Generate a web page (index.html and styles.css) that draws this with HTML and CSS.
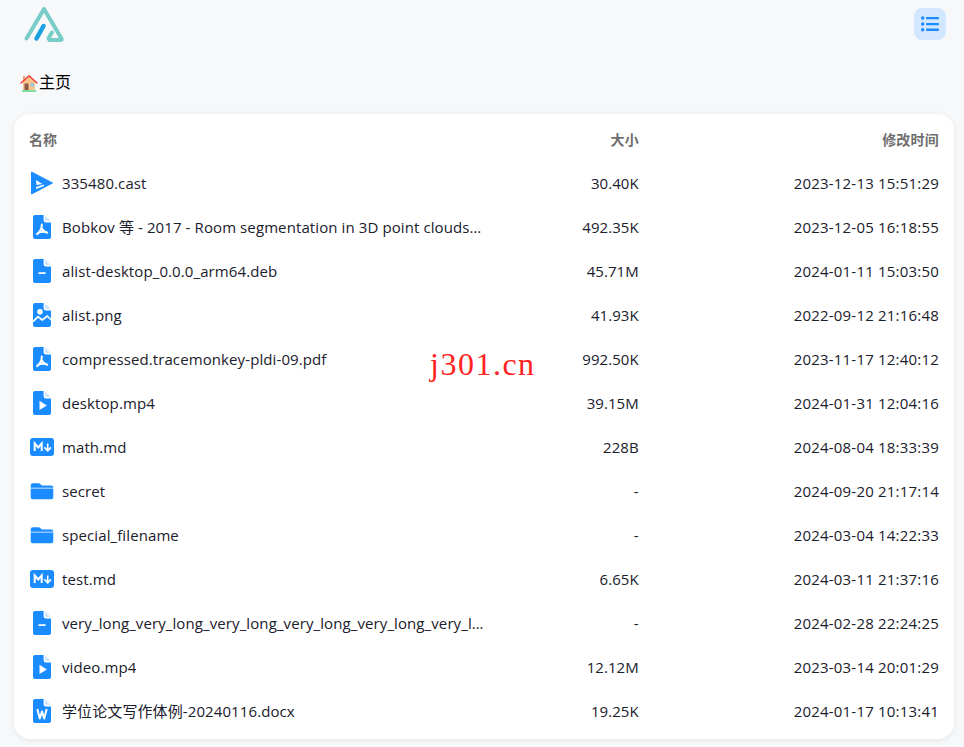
FILE: index.html
```html
<!DOCTYPE html>
<html lang="zh">
<head>
<meta charset="utf-8">
<title>主页</title>
<link rel="stylesheet" href="styles.css">
</head>
<body>
<svg class="defs" width="0" height="0" aria-hidden="true">
  <defs>
    <path id="doc" d="M5 0h8.600v5.200a2.400 2.400 0 0 0 2.400 2.400h5V22a2 2 0 0 1-2 2H5a2 2 0 0 1-2-2V2a2 2 0 0 1 2-2z"/>
    <path id="fold" fill="#cfe4ff" d="M15 .4 20.600 6H16a1 1 0 0 1-1-1z"/>
    <symbol id="i-video" viewBox="0 0 24 24"><use href="#doc"/><use href="#fold"/><path fill="#fff" d="M9.500 9.700v9.300l7.300-4.600z"/></symbol>
    <symbol id="i-pdf" viewBox="0 0 24 24"><use href="#doc"/><use href="#fold"/><path fill="none" stroke="#fff" stroke-width="2" stroke-linecap="round" d="M11.800 9.500c.2 3.200-1.800 7.300-4.800 9.700M11.800 13.500c1 2 3 3.600 5.400 4.200M7.500 18.300c3-1.600 6.200-2.100 9.500-.8"/></symbol>
    <symbol id="i-bin" viewBox="0 0 24 24"><use href="#doc"/><use href="#fold"/><rect x="8.500" y="13.200" width="7.200" height="1.800" rx=".4" fill="#fff"/></symbol>
    <symbol id="i-img" viewBox="0 0 24 24"><use href="#doc"/><use href="#fold"/><circle cx="10" cy="8.700" r="2.800" fill="#fff"/><path fill="none" stroke="#fff" stroke-width="1.700" stroke-linejoin="round" d="M3 18.700 8 13.700l4.300 3.300 5-4 4 4"/></symbol>
    <symbol id="i-word" viewBox="0 0 24 24"><use href="#doc"/><use href="#fold"/><path fill="none" stroke="#fff" stroke-width="2" stroke-linejoin="round" d="m7.300 10 2.500 9.500 2.200-7 2.200 7 2.500-9.500"/></symbol>
    <symbol id="i-cast" viewBox="0 0 24 24"><path stroke="#1a8cff" stroke-width="1" stroke-linejoin="round" d="M1.500 1 22.500 12 1.500 23z"/><path fill="#fff" d="m6 9 6.300 4-5.800 1zM6 16l8-2.500V15l-8 3z"/></symbol>
    <symbol id="i-md" viewBox="0 0 24 24"><rect y="3" width="24" height="18" rx="3"/><path fill="none" stroke="#fff" stroke-width="2" d="M4.700 16V8.500l3.500 4 3.500-4V16"/><path fill="none" stroke="#fff" stroke-width="1.600" d="M17.700 8.500V16M14.400 12.400l3.300 3.500 3.300-3.500"/></symbol>
    <symbol id="i-folder" viewBox="0 0 24 24"><path d="M3 4.300h5.500c.8 0 1.400.3 2 .9L12 6.500h9.300a2 2 0 0 1 2 2v.2H.7V6.500a2.200 2.200 0 0 1 2.300-2.200z"/><path d="M.7 9.500h22.600v8.800a2 2 0 0 1-2 2H2.700a2 2 0 0 1-2-2z"/></symbol>
  </defs>
</svg>
<header class="nav">
  <svg class="logo" viewBox="0 0 44 44" aria-label="logo">
    <path fill="none" stroke="#78cdc8" stroke-width="4" stroke-linecap="round" stroke-linejoin="round" d="M4.500 33.500 22 4 39.500 33.500c.500 1 0 1.500-1 1.500H27.500l-1-2 3.500-5.500"/>
    <path fill="none" stroke="#1ba0e2" stroke-width="4.500" stroke-linecap="round" d="M14.500 33.500 21.500 21"/>
  </svg>
  <button class="menu" aria-label="menu">
    <svg viewBox="0 0 18 18" class="menu-ico">
      <circle cx="1.700" cy="3" r="1.700"/><circle cx="1.700" cy="9" r="1.700"/><circle cx="1.700" cy="14.700" r="1.700"/>
      <rect x="5" y="1.900" width="13" height="2.300" rx=".8"/><rect x="5" y="7.900" width="13" height="2.300" rx=".8"/><rect x="5" y="13.600" width="13" height="2.300" rx=".8"/>
    </svg>
  </button>
</header>
<nav class="crumb">
  <svg class="house" viewBox="0 0 18 18" aria-hidden="true">
    <rect x="2" y="16" width="14" height="2" fill="#7ee0a0"/>
    <rect x="3" y="2" width="2" height="5" fill="#e8a77a"/>
    <path fill="#f7c58c" d="M3 8 9 3l6 5v8H3z"/>
    <path fill="none" stroke="#f0443c" stroke-width="1.600" stroke-linecap="round" stroke-linejoin="round" d="M1 9 9 1.800 17 9"/>
    <rect x="4.500" y="9.500" width="4" height="6.500" fill="#8d5a45"/>
    <rect x="10.500" y="9.500" width="3.500" height="3" fill="#8ec5ef"/>
  </svg>
  <span>主页</span>
</nav>
<main class="card">
  <div class="row head"><span class="name">名称</span><span class="size">大小</span><span class="time">修改时间</span></div>
  <div class="row"><span class="name"><svg class="ico"><use href="#i-cast"/></svg><span class="label">335480.cast</span></span><span class="size">30.40K</span><span class="time">2023-12-13 15:51:29</span></div>
  <div class="row"><span class="name"><svg class="ico"><use href="#i-pdf"/></svg><span class="label">Bobkov 等 - 2017 - Room segmentation in 3D point clouds using anisotropic potential fields.pdf</span></span><span class="size">492.35K</span><span class="time">2023-12-05 16:18:55</span></div>
  <div class="row"><span class="name"><svg class="ico"><use href="#i-bin"/></svg><span class="label">alist-desktop_0.0.0_arm64.deb</span></span><span class="size">45.71M</span><span class="time">2024-01-11 15:03:50</span></div>
  <div class="row"><span class="name"><svg class="ico"><use href="#i-img"/></svg><span class="label">alist.png</span></span><span class="size">41.93K</span><span class="time">2022-09-12 21:16:48</span></div>
  <div class="row"><span class="name"><svg class="ico"><use href="#i-pdf"/></svg><span class="label">compressed.tracemonkey-pldi-09.pdf</span></span><span class="size">992.50K</span><span class="time">2023-11-17 12:40:12</span></div>
  <div class="row"><span class="name"><svg class="ico"><use href="#i-video"/></svg><span class="label">desktop.mp4</span></span><span class="size">39.15M</span><span class="time">2024-01-31 12:04:16</span></div>
  <div class="row"><span class="name"><svg class="ico"><use href="#i-md"/></svg><span class="label">math.md</span></span><span class="size">228B</span><span class="time">2024-08-04 18:33:39</span></div>
  <div class="row"><span class="name"><svg class="ico"><use href="#i-folder"/></svg><span class="label">secret</span></span><span class="size">-</span><span class="time">2024-09-20 21:17:14</span></div>
  <div class="row"><span class="name"><svg class="ico"><use href="#i-folder"/></svg><span class="label">special_filename</span></span><span class="size">-</span><span class="time">2024-03-04 14:22:33</span></div>
  <div class="row"><span class="name"><svg class="ico"><use href="#i-md"/></svg><span class="label">test.md</span></span><span class="size">6.65K</span><span class="time">2024-03-11 21:37:16</span></div>
  <div class="row"><span class="name"><svg class="ico"><use href="#i-bin"/></svg><span class="label">very_long_very_long_very_long_very_long_very_long_very_long_very_long_very_long</span></span><span class="size">-</span><span class="time">2024-02-28 22:24:25</span></div>
  <div class="row"><span class="name"><svg class="ico"><use href="#i-video"/></svg><span class="label">video.mp4</span></span><span class="size">12.12M</span><span class="time">2023-03-14 20:01:29</span></div>
  <div class="row"><span class="name"><svg class="ico"><use href="#i-word"/></svg><span class="label">学位论文写作体例-20240116.docx</span></span><span class="size">19.25K</span><span class="time">2024-01-17 10:13:41</span></div>
</main>
<div class="mark">j301.cn</div>
</body>
</html>
```
FILE: styles.css
```css
* { box-sizing: border-box; }
html, body { height: 100%; }
body {
  margin: 0;
  background: #f7f8fa;
  color: #1a202c;
  font-family: "Open Sans", "Noto Sans CJK SC", sans-serif;
  font-size: 15px;
  letter-spacing: .1px;
  overflow: hidden;
}
.defs { position: absolute; }
.nav {
  height: 48px;
  padding: 8px 18px 0 22px;
  display: flex;
  justify-content: space-between;
  align-items: flex-start;
}
.logo { width: 44px; height: 44px; margin-top: -3px; }
.menu {
  width: 32px;
  height: 32px;
  padding: 0;
  border: 0;
  border-radius: 8px;
  background: #d3e6ff;
  display: flex;
  align-items: center;
  justify-content: center;
}
.menu-ico { width: 18px; height: 18px; fill: #1a8cff; }
.crumb {
  height: 66px;
  padding: 23px 0 0 20px;
  display: flex;
  align-items: flex-start;
  gap: 1px;
  font-size: 16px;
  line-height: 22px;
  letter-spacing: 0;
  color: #000;
}
.house { width: 18px; height: 18px; margin-top: 3px; }
.card {
  margin: 0 10px 0 14px;
  padding: 5px 15px 5px;
  height: 625px;
  background: #fff;
  border-radius: 16px;
  box-shadow: 0 1px 6px rgba(0, 0, 0, .08);
}
.row {
  height: 44px;
  display: grid;
  grid-template-columns: 50% 17% 33%;
  align-items: center;
  line-height: 20px;
}
.row.head {
  height: 42px;
  font-size: 14px;
  font-weight: 700;
  letter-spacing: 0;
  color: #6f6f6f;
}
.name { display: flex; align-items: center; min-width: 0; gap: 8px; }
.ico { width: 24px; height: 24px; flex: none; fill: #1a8cff; margin-left: 1px; }
.label {
  min-width: 0;
  overflow: hidden;
  white-space: nowrap;
  text-overflow: ellipsis;
}
.size { text-align: right; letter-spacing: .05px; }
.time { text-align: right; letter-spacing: .2px; }
.mark {
  position: absolute;
  left: 430px;
  top: 345px;
  color: #f22;
  font-family: "Liberation Serif", serif;
  font-size: 32px;
  letter-spacing: 1.5px;
  line-height: 38px;
}
```
